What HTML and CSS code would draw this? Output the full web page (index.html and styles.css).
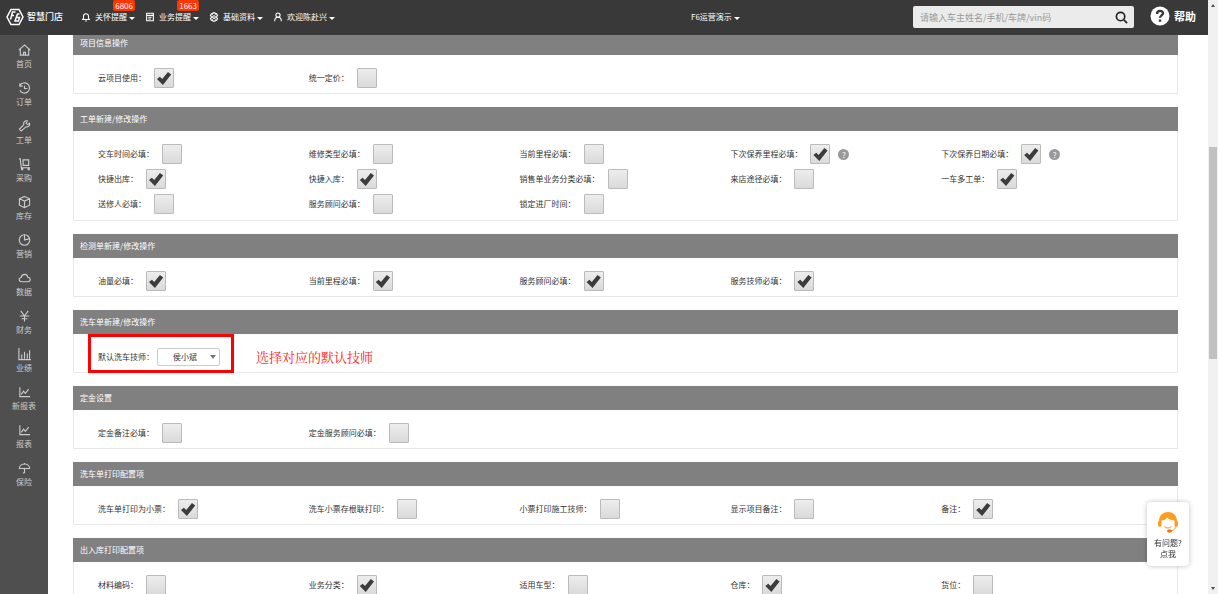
FILE: index.html
```html
<!DOCTYPE html>
<html lang="zh-CN">
<head>
<meta charset="utf-8">
<title>智慧门店</title>
<link rel="stylesheet" href="styles.css">
</head>
<body>
<div class="app">
  <header class="topbar">
    <div class="brand">
      <svg class="logo" viewBox="0 0 18 18"><path d="M5 1.500h8L17 9l-4 7.500H5L1 9z"/><path d="M9.500 4H6.500L4.500 11.500M5.500 7.500H8M13.500 6h-2L9 13h3.500l1-3.500H10"/></svg>
      <span>智慧门店</span>
    </div>
    <nav class="topnav">
      <button class="navitem"><svg class="ico" viewBox="0 0 12 12"><path d="M2 9h8L9 7.500V5a3 3 0 0 0-6 0v2.500zM5 10.800h2"/></svg><span>关怀提醒</span><i class="caret"></i><b class="badge">6806</b></button>
      <button class="navitem"><svg class="ico" viewBox="0 0 12 12"><path d="M2 1.500h8v9H2zM2 4h8M4 6.300h4M4 8.300h3"/></svg><span>业务提醒</span><i class="caret"></i><b class="badge">1663</b></button>
      <button class="navitem"><svg class="ico" viewBox="0 0 12 12"><path d="M4.800 1h2.400l.4 1.500 1.500-.4 1.200 2L9.200 5.200v1.600l1.100 1.100-1.200 2-1.500-.4-.4 1.500H4.800l-.4-1.500-1.500.4-1.200-2 1.100-1.100V5.200L1.700 4.100l1.200-2 1.500.4z"/><circle cx="6" cy="6" r="1.600"/></svg><span>基础资料</span><i class="caret"></i></button>
      <button class="navitem"><svg class="ico" viewBox="0 0 12 12"><circle cx="6" cy="3.700" r="2.500"/><path d="M2 11c0-3 1.500-4.700 4-4.700S10 8 10 11"/></svg><span>欢迎陈赴兴</span><i class="caret"></i></button>
    </nav>
    <button class="navitem store"><span>F6运营演示</span><i class="caret"></i></button>
    <form class="search">
      <input type="text" aria-label="搜索" placeholder="请输入车主姓名/手机/车牌/vin码">
      <button type="button" aria-label="搜索"><svg viewBox="0 0 14 14"><circle cx="6" cy="6" r="4.500"/><path d="M9.500 9.500L13 13"/></svg></button>
    </form>
    <a class="help" href="#"><svg viewBox="0 0 20 20"><circle cx="10" cy="10" r="9.500"/><path d="M7 8c0-4 6-4 6-.700 0 2-3 2.200-3 4.500M10 13.500v2.200"/></svg>帮助</a>
  </header>

  <nav class="sidebar">
    <a href="#"><svg viewBox="0 0 14 14"><path d="M1 7l6-5.500L13 7M2.500 6v6.500h9V6M6 12.500v-3h2v3"/></svg>首页</a>
    <a href="#"><svg viewBox="0 0 14 14"><path d="M2 4.500A5.500 5.500 0 1 1 2 9.500M2 2v3h3M7 4.500v3h3"/></svg>订单</a>
    <a href="#"><svg viewBox="0 0 14 14"><path d="M12.500 4l-2 1.500L8.700 4 10 1.500C7.500.8 5.500 3 6.200 5.500L1.500 10.500l2 2L8.500 8C11 8.500 13.200 6.500 12.500 4z"/></svg>工单</a>
    <a href="#"><svg viewBox="0 0 14 14"><path d="M1 1.500h1.500l1 9.500H13M5.500 2.500h6v6h-6z"/><circle cx="4.500" cy="12.500" r=".8"/><circle cx="11.500" cy="12.500" r=".8"/></svg>采购</a>
    <a href="#"><svg viewBox="0 0 14 14"><path d="M7 1l5.500 2.500v7L7 13l-5.500-2.500v-7zM1.500 3.500L7 6l5.500-2.500M7 6v7"/></svg>库存</a>
    <a href="#"><svg viewBox="0 0 14 14"><circle cx="7" cy="7" r="5.700"/><path d="M7 1.300V7l5.500-1.500"/></svg>营销</a>
    <a href="#"><svg viewBox="0 0 14 14"><path d="M4 11C.5 11 .5 7 3.500 6.500 4 2 10 2 10.500 6.200c3.500.3 3.500 4.800 0 4.800z"/></svg>数据</a>
    <a href="#"><svg viewBox="0 0 14 14"><path d="M3 1.500l4 5.500 4-5.500M2 7h10M7 7v6M4 10h6"/></svg>财务</a>
    <a href="#"><svg viewBox="0 0 14 14"><path d="M1 .5v12.500h13M4 12V7.500M7 12V4.500M10 12V6.500M12.500 12V3"/></svg>业绩</a>
    <a href="#"><svg viewBox="0 0 14 14"><path d="M2 2v10h11M3.500 9.500L6 6l2 2.500L11.500 4"/></svg>新报表</a>
    <a href="#"><svg viewBox="0 0 14 14"><path d="M2 2v10h11M3.500 9.500L6 6l2 2.500L11.500 4"/></svg>报表</a>
    <a href="#"><svg viewBox="0 0 14 14"><path d="M1.500 7.500c0-6.500 11-6.500 11 0zM7 7.500V12l-1.500.5M7 1.500v1"/></svg>保险</a>
  </nav>

  <main class="content">
    <section class="panel"><h2>项目信息操作</h2>
      <div class="options">
        <label>云项目使用：<input type="checkbox" checked></label>
        <label>统一定价：<input type="checkbox"></label>
      </div></section>
    <section class="panel panel-tall"><h2>工单新建/修改操作</h2>
      <div class="options">
        <label>交车时间必填：<input type="checkbox"></label>
        <label>维修类型必填：<input type="checkbox"></label>
        <label>当前里程必填：<input type="checkbox"></label>
        <label>下次保养里程必填：<input type="checkbox" checked><span class="tip">?</span></label>
        <label>下次保养日期必填：<input type="checkbox" checked><span class="tip">?</span></label>
        <label>快捷出库：<input type="checkbox" checked></label>
        <label>快捷入库：<input type="checkbox" checked></label>
        <label>销售单业务分类必填：<input type="checkbox"></label>
        <label>来店途径必填：<input type="checkbox"></label>
        <label>一车多工单：<input type="checkbox" checked></label>
        <label>送修人必填：<input type="checkbox"></label>
        <label>服务顾问必填：<input type="checkbox"></label>
        <label>锁定进厂时间：<input type="checkbox"></label>
      </div></section>
    <section class="panel"><h2>检测单新建/修改操作</h2>
      <div class="options">
        <label>油量必填：<input type="checkbox" checked></label>
        <label>当前里程必填：<input type="checkbox" checked></label>
        <label>服务顾问必填：<input type="checkbox" checked></label>
        <label>服务技师必填：<input type="checkbox" checked></label>
      </div></section>
    <section class="panel"><h2>洗车单新建/修改操作</h2>
      <div class="options">
        <div class="marked">
          <label class="pick">默认洗车技师：<select><option>侯小斌</option></select></label>
          <div class="frame"></div>
          <p class="note">选择对应的默认技师</p>
        </div>
      </div></section>
    <section class="panel"><h2>定金设置</h2>
      <div class="options">
        <label>定金备注必填：<input type="checkbox"></label>
        <label>定金服务顾问必填：<input type="checkbox"></label>
      </div></section>
    <section class="panel"><h2>洗车单打印配置项</h2>
      <div class="options">
        <label>洗车单打印为小票：<input type="checkbox" checked></label>
        <label>洗车小票存根联打印：<input type="checkbox"></label>
        <label>小票打印施工技师：<input type="checkbox"></label>
        <label>显示项目备注：<input type="checkbox"></label>
        <label>备注：<input type="checkbox" checked></label>
      </div></section>
    <section class="panel"><h2>出入库打印配置项</h2>
      <div class="options">
        <label>材料编码：<input type="checkbox"></label>
        <label>业务分类：<input type="checkbox" checked></label>
        <label>适用车型：<input type="checkbox"></label>
        <label>仓库：<input type="checkbox" checked></label>
        <label>货位：<input type="checkbox"></label>
      </div></section>
  </main>

  <div class="scrollbar"><i class="arrow up"></i><div class="track"><div class="thumb"></div></div><i class="arrow down"></i></div>

  <button class="service">
    <svg viewBox="0 0 22 22"><path class="hair" d="M2 10C2-2 20-2 20 10l1 1v4l-2 1-1.500-1V9.500C14 9 11 8 10 6.500 9 8.500 7 9.500 4.500 9.500V15L3 16l-2-1v-4z"/><path class="smile" d="M7.500 15.500c2 2 5 2 7 0M18.500 15.500c0 3-3 4.500-6 4.500"/><ellipse class="mic" cx="12.500" cy="20" rx="2.500" ry="1.800"/></svg>
    <span>有问题?</span><span>点我</span>
  </button>
</div>
</body>
</html>
```

FILE: styles.css
```css
* { box-sizing: border-box; }
body {
  margin: 0;
  font: 8px/12px "Noto Sans CJK SC", sans-serif;
  color: #333;
  background: #fff;
}
button, input, select { font: inherit; color: inherit; margin: 0; padding: 0; border: 0; background: none; }
a { color: inherit; text-decoration: none; }
svg { fill: none; stroke: currentColor; flex: none; }

.app {
  display: grid;
  grid-template: 35px minmax(0, 1fr) / 48px minmax(0, 1fr) 10px;
  height: 100vh;
  overflow: hidden;
}
.topbar {
  grid-column: 1 / 3;
  display: grid;
  grid-template-columns: 75px minmax(0, 1fr) 222px 221px 74px;
  align-items: center;
  padding-bottom: 1px;
  background: #393939;
  color: #fff;
}
.brand { display: flex; align-items: center; gap: 3px; padding-left: 6px; font-size: 9px; font-weight: 500; }
.logo { width: 18px; height: 18px; stroke-width: 1.5; }
.topnav { display: flex; padding-left: 6px; gap: 10px; }
.navitem { position: relative; display: flex; align-items: center; white-space: nowrap; }
.ico { width: 10px; height: 10px; margin-right: 4px; stroke-width: 1.3; }
.caret { margin: 2px 0 0 2px; border: 3px solid transparent; border-top-color: #fff; border-bottom: 0; }
.badge {
  position: absolute;
  right: 0;
  top: -11px;
  padding: 0 2px;
  border-radius: 2px;
  background: #ff3600;
  font-size: 8px;
  line-height: 11px;
  font-weight: 400;
}
.search { display: flex; align-items: center; height: 22px; border-radius: 2px; background: #ebebeb; }
.search input { flex: 1; min-width: 0; height: 22px; padding-left: 7px; font-size: 9px; color: #333; outline: 0; }
.search input::placeholder { color: #999; }
.search button { display: flex; padding-right: 6px; color: #222; }
.search svg { width: 13px; height: 13px; stroke-width: 1.8; }
.help { display: flex; align-items: center; gap: 4px; padding: 0 0 2px 16px; font-size: 11px; font-weight: 700; white-space: nowrap; }
.help svg { width: 20px; height: 20px; }
.help circle { fill: #fff; stroke: none; }
.help path { stroke: #393939; stroke-width: 2.4; }

.sidebar { display: flex; flex-direction: column; padding-top: 8px; background: #4f4f4f; color: #ccc; }
.sidebar a { display: flex; flex-direction: column; align-items: center; gap: 1px; height: 38px; }
.sidebar svg { width: 13px; height: 14px; stroke-width: 1.2; }

.content { padding: 0 30px 0 25px; overflow: hidden; }
.panel { margin-bottom: 13px; }
.panel:first-child { margin-top: -4px; }
.panel h2 { margin: 0; padding: 0 7px; background: #808080; color: #fff; font-size: 8px; font-weight: 400; line-height: 24px; }
.options {
  display: grid;
  grid-template-columns: repeat(5, minmax(0, 1fr));
  row-gap: 5px;
  padding: 13px 25px 5px 24px;
  border: 1px solid #e8e8e8;
  border-top: 0;
}
.panel-tall .options { padding-bottom: 6px; }
.options label { display: flex; align-items: center; gap: 8px; height: 20px; white-space: nowrap; }
.options input {
  appearance: none;
  width: 20px;
  height: 20px;
  border: 1px solid #bbb;
  border-radius: 1px;
  background: linear-gradient(#ededed, #dadada);
}
.options input:checked::before {
  content: "";
  display: block;
  width: 18px;
  height: 18px;
  background: #3c3c3c;
  clip-path: polygon(11% 56%, 27% 43%, 40% 56%, 72% 17%, 90% 31%, 44% 89%);
}
.tip {
  width: 11px;
  height: 11px;
  border-radius: 50%;
  background: #999;
  color: #fff;
  font-size: 8px;
  line-height: 11px;
  text-align: center;
}
.marked { position: relative; }
.options .pick { gap: 3px; }
.pick select {
  appearance: none;
  width: 63px;
  height: 18px;
  padding-left: 15px;
  border: 1px solid #ccc;
  border-radius: 2px;
  background: #fff;
}
.pick::after { content: ""; margin-left: -13px; border: 3px solid transparent; border-top: 4px solid #777; border-bottom: 0; pointer-events: none; }
.frame { position: absolute; left: -10px; top: -13px; width: 146px; height: 39px; border: 3px solid #f00; pointer-events: none; }
.note { position: absolute; left: 158px; top: 0; margin: 0; color: #f22; font: 13px/20px "Noto Serif CJK SC", "Noto Sans CJK SC", serif; white-space: nowrap; }

.scrollbar { grid-column: 3; grid-row: 1 / 3; display: flex; flex-direction: column; align-items: center; background: #f1f1f1; }
.track { flex: 1; width: 8px; padding-top: 136px; }
.thumb { height: 39%; min-height: 212px; background: #c1c1c1; }
.arrow { margin: 4px 0; border: 2px solid transparent; }
.up { border-top: 0; border-bottom: 3px solid #505050; }
.down { border-bottom: 0; border-top: 3px solid #505050; }

.service {
  position: fixed;
  right: 29px;
  bottom: 28px;
  display: flex;
  flex-direction: column;
  align-items: center;
  width: 42px;
  padding: 9px 0 7px;
  border-radius: 4px;
  background: #fff;
  box-shadow: 0 0 5px rgba(0, 0, 0, 0.25);
  line-height: 11px;
}
.service svg { width: 22px; height: 22px; margin-bottom: 4px; stroke: none; }
.service .hair { fill: #ff9d1e; }
.service .smile { stroke: #ff8a1e; stroke-width: 1; }
.service .mic { fill: #f57316; }
```
